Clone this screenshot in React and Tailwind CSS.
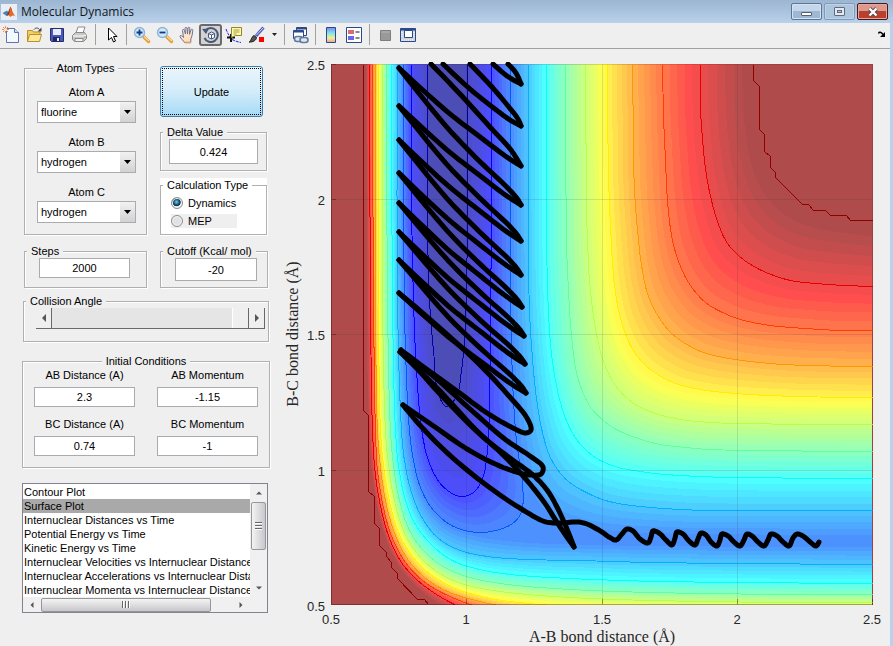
import React from "react";

/* ---------- contour geometry ---------- */

const LEVEL_STEP = 87.6;
const BANDS = 5;

// Contours from the highest level to the lowest, wall side.
const OUTER = [
  [[366, 64], [367, 300], [368, 400], [370, 450], [374, 490], [380, 520], [388, 545], [400, 568], [420, 590], [440, 605], [470, 620], [600, 638], [872, 645]],
  [[369, 64], [370, 300], [372, 430], [375, 475], [381, 510], [389, 538], [401, 562], [415, 578], [430, 590], [450, 602], [480, 615], [600, 630], [872, 636]],
  [[372, 64], [373, 300], [375, 430], [377, 470], [384, 512], [392, 538], [405, 562], [422, 580], [441, 592], [470, 604], [510, 614], [620, 624], [872, 628]],
  [[375, 64], [375, 300], [377, 430], [380, 467], [386, 505], [395, 535], [408, 560], [428, 580], [452, 593], [493, 604], [540, 611], [640, 617], [872, 620]],
  [[378, 64], [378, 300], [380, 430], [383, 465], [389, 501], [398, 532], [412, 556], [430, 574], [455, 588], [490, 598], [553, 605], [650, 609], [872, 612]],
  [[382, 64], [382, 300], [385, 430], [388, 465], [394, 500], [403, 530], [416, 552], [435, 570], [461, 583], [500, 591], [570, 597], [700, 601], [872, 602]],
  [[386, 64], [387, 300], [390, 430], [393, 465], [399, 500], [409, 530], [423, 550], [441, 565], [466, 576], [500, 583], [570, 589], [700, 593], [872, 594]],
  [[391, 64], [392, 300], [395, 430], [398, 465], [405, 500], [415, 524], [430, 543], [450, 559], [475, 568], [510, 574], [570, 578], [660, 581], [872, 583]],
  [[397, 64], [397, 300], [401, 430], [404, 460], [411, 492], [422, 518], [438, 538], [460, 550], [487, 556], [527, 559], [580, 560], [650, 562], [872, 564]],
  [[403, 64], [404, 300], [409, 430], [413, 460], [420, 487], [433, 510], [453, 526], [480, 533], [520, 538], [580, 541], [650, 542], [872, 543]],
];

// The same levels on the dissociation side.
const INNER = [
  [[742, 64], [744, 120], [750, 160], [762, 190], [785, 215], [815, 228], [872, 236]],
  [[700, 64], [700, 107], [703, 150], [706, 175], [711, 200], [718, 224], [727, 243], [737, 254], [750, 264], [768, 273], [790, 280], [815, 283], [845, 285], [872, 286]],
  [[662, 64], [663, 115], [665, 160], [667, 200], [672, 240], [680, 266], [690, 285], [705, 302], [722, 312], [740, 319], [770, 325], [805, 328], [840, 330], [872, 330]],
  [[632, 64], [633, 137], [634, 190], [638, 240], [641, 265], [647, 293], [656, 313], [670, 332], [688, 345], [706, 353], [735, 359], [770, 363], [805, 365], [872, 366]],
  [[607, 64], [608, 175], [611, 245], [614, 285], [620, 318], [630, 345], [643, 363], [657, 374], [675, 383], [700, 389], [735, 393], [795, 396], [872, 397]],
  [[585, 64], [586, 200], [587, 240], [589, 280], [594, 322], [602, 358], [615, 385], [632, 402], [655, 413], [675, 418], [710, 422], [750, 423], [800, 424], [872, 424]],
  [[565, 64], [566, 240], [568, 290], [571, 335], [577, 376], [589, 405], [603, 420], [620, 431], [655, 443], [685, 447], [710, 449], [750, 450], [872, 451]],
  [[546, 64], [546, 240], [549, 330], [553, 368], [560, 402], [569, 427], [580, 444], [592, 455], [602, 461], [618, 467], [640, 471], [665, 474], [700, 476], [735, 477], [872, 478]],
  [[528, 64], [528, 240], [529, 310], [533, 370], [537, 405], [542, 432], [549, 455], [560, 473], [572, 484], [590, 494], [602, 499], [618, 503], [640, 506], [680, 509], [720, 510], [872, 510]],
  [[510, 64], [510, 240], [511, 350], [515, 430], [520, 470], [528, 500], [545, 522], [575, 533], [620, 538], [700, 540], [872, 541]],
];

// Closed wells, from the right top round the bottom to the left top.
const WELLS = [
  [[510, 64], [510, 200], [511, 350], [515, 430], [518, 455], [522, 483], [522, 507], [518, 517], [507, 526], [480, 532], [453, 526], [433, 510], [420, 487], [413, 460], [409, 430], [405, 350], [403, 200], [403, 64]],
  [[491, 64], [491, 200], [490, 320], [489, 400], [487, 450], [482, 478], [473, 492], [461, 496], [450, 492], [439, 482], [429, 463], [422, 435], [416, 370], [412, 260], [411, 160], [411, 64]],
  [[467, 64], [467, 180], [466, 290], [464, 340], [461, 370], [456, 396], [446, 406], [438, 394], [433, 350], [429, 300], [427, 220], [427, 150], [427, 64]],
];

const RIDGE_FAR = [[753, 64], [753, 80], [759, 86], [759, 129], [764, 134], [764, 151], [770, 156], [770, 167], [775, 172], [775, 177], [802, 204], [808, 204], [813, 210], [825, 210], [830, 215], [846, 215], [850, 220], [872, 220]];
const RIDGE_WALL = [[363, 64], [363, 410], [368, 415], [368, 491], [374, 496], [374, 523], [379, 528], [379, 545], [386, 552], [386, 556], [391, 562], [391, 567], [397, 573], [397, 578], [417, 599], [424, 599], [428, 604]];

function smooth(pts, n = 8) {
  const out = [];
  for (let i = 0; i < pts.length - 1; i++) {
    const p0 = pts[Math.max(i - 1, 0)];
    const p1 = pts[i];
    const p2 = pts[i + 1];
    const p3 = pts[Math.min(i + 2, pts.length - 1)];
    const d = (a, b) => Math.max(Math.sqrt(Math.hypot(a[0] - b[0], a[1] - b[1])), 0.001);
    const d1 = d(p0, p1);
    const d2 = d(p1, p2);
    const d3 = d(p2, p3);
    const c = [0, 1].map((k) => {
      const a = i === 0 ? p1[k] : (d1 * d1 * p2[k] - d2 * d2 * p0[k] + (2 * d1 * d1 + 3 * d1 * d2 + d2 * d2) * p1[k]) / (3 * d1 * (d1 + d2));
      const b = i === pts.length - 2 ? p2[k] : (d3 * d3 * p1[k] - d2 * d2 * p3[k] + (2 * d3 * d3 + 3 * d3 * d2 + d2 * d2) * p2[k]) / (3 * d3 * (d3 + d2));
      return [p1[k], a, b, p2[k]];
    });
    for (let s = 0; s < n; s++) {
      const t = s / n;
      const u = 1 - t;
      out.push(c.map((q) => u * u * u * q[0] + 3 * u * u * t * q[1] + 3 * u * t * t * q[2] + t * t * t * q[3]));
    }
  }
  out.push(pts[pts.length - 1]);
  return out;
}

// Points of a contour on rays that leave the top right corner of the axes.
function onRays(pts, rays = 120) {
  const line = smooth(pts);
  const out = [];
  let i = 0;
  for (let r = 0; r <= rays; r++) {
    const a = (Math.PI / 2) * (r / rays);
    const side = (p) => (p[1] - 64) * Math.cos(a) - (872 - p[0]) * Math.sin(a);
    while (i < line.length - 2 && side(line[i + 1]) < 0) i++;
    const s0 = side(line[i]);
    const s1 = side(line[i + 1]);
    const t = s1 === s0 ? 0 : Math.min(1, Math.max(0, -s0 / (s1 - s0)));
    out.push([0, 1].map((k) => line[i][k] + (line[i + 1][k] - line[i][k]) * t));
  }
  return out;
}

function byLength(pts, n = 140) {
  const line = smooth(pts);
  const len = [0];
  for (let i = 1; i < line.length; i++) len.push(len[i - 1] + Math.hypot(line[i][0] - line[i - 1][0], line[i][1] - line[i - 1][1]));
  const total = len[len.length - 1];
  const out = [];
  let i = 0;
  for (let k = 0; k <= n; k++) {
    const s = (total * k) / n;
    while (i < line.length - 2 && len[i + 1] < s) i++;
    const t = (s - len[i]) / (len[i + 1] - len[i]);
    out.push([0, 1].map((c) => line[i][c] + (line[i + 1][c] - line[i][c]) * t));
  }
  return out;
}

const blend = (a, b, t) => a.map((p, i) => [p[0] + (b[i][0] - p[0]) * t, p[1] + (b[i][1] - p[1]) * t]);
const toPath = (pts) => "M" + pts.map((p) => p[0].toFixed(1) + " " + p[1].toFixed(1)).join("L");

function jet(d) {
  if (d < 112) return [143 + d, 0, 0];
  if (d < 367) return [255, d - 112, 0];
  if (d < 622) return [622 - d, 255, d - 367];
  if (d < 877) return [0, 877 - d, 255];
  return [0, 0, 1132 - d];
}
const lineColor = (d) => `rgb(${jet(d).map(Math.round).join(",")})`;
const fillColor = (d) => `rgb(${jet(d).map((c) => Math.round(77 + 0.7 * c)).join(",")})`;

function buildBands() {
  const outer = OUTER.map((c) => onRays(c));
  const inner = INNER.map((c) => onRays(c));
  const wells = WELLS.map((c) => byLength(c));
  const bands = [];
  for (let l = 0; l < outer.length - 1; l++)
    for (let b = 0; b < BANDS; b++) {
      const t = b / BANDS;
      const o = blend(outer[l], outer[l + 1], t);
      const n = blend(inner[l], inner[l + 1], t).reverse();
      bands.push({ d: toPath([...o, ...n]) + "Z", fill: fillColor((l + t + 0.5 / BANDS) * LEVEL_STEP) });
    }
  for (let l = 0; l < 2; l++)
    for (let b = 0; b < BANDS; b++) {
      const t = b / BANDS;
      bands.push({ d: toPath(blend(wells[l], wells[l + 1], t)) + "Z", fill: fillColor((9 + l + t + 0.5 / BANDS) * LEVEL_STEP) });
    }
  bands.push({ d: toPath(wells[2]) + "Z", fill: fillColor(980) });
  return bands;
}

function buildLines() {
  const lines = [
    { d: toPath(RIDGE_FAR), stroke: "#8f0000" },
    { d: toPath(RIDGE_WALL), stroke: "#8f0000" },
  ];
  for (let l = 1; l < 9; l++) {
    lines.push({ d: toPath(smooth(OUTER[l])), stroke: lineColor(l * LEVEL_STEP) });
    lines.push({ d: toPath(smooth(INNER[l])), stroke: lineColor(l * LEVEL_STEP) });
  }
  WELLS.forEach((w, i) => lines.push({ d: toPath(smooth(w)), stroke: lineColor((9 + i) * LEVEL_STEP) }));
  return lines;
}

/* ---------- trajectory ---------- */

const WAVE = [
  [819, 542], [816, 546], [809, 541], [803, 536], [797, 534], [793, 538], [789, 546], [783, 542], [777, 536], [771, 534], [768, 540], [764, 546], [758, 542], [752, 536],
  [747, 534], [744, 540], [740, 546], [734, 542], [728, 536], [722, 534], [720, 540], [717, 546], [711, 542], [706, 535], [701, 533], [698, 539], [695, 545], [689, 541],
  [683, 534], [677, 532], [675, 538], [672, 545], [666, 540], [659, 533], [653, 531], [651, 537], [648, 543], [640, 539], [633, 531], [627, 529], [622, 534], [616, 540],
  [609, 537], [602, 532], [587, 524], [577, 522], [563, 523], [553, 523], [543, 521], [523, 510], [500, 495], [467, 470], [440, 446], [418, 423], [403, 405],
];
const LOOP_1 = [[403, 405], [435, 427], [467, 449], [493, 463], [513, 471], [530, 475], [541, 474], [543, 467], [530, 456], [506, 440], [470, 409], [432, 375], [400, 352]];
const DIVE = [[400, 352], [440, 391], [476, 430], [500, 452], [524, 477], [544, 502], [560, 527], [574, 547]];
const RISE = [[574, 547], [567, 529], [557, 507], [547, 490], [533, 475], [510, 458], [483, 437], [440, 394], [401, 350]];
const LOOP_2 = [[401, 350], [425, 368], [457, 391], [487, 413], [513, 428], [526, 433], [531, 430], [527, 418], [508, 395], [480, 365], [440, 328], [399, 293]];
const LEFT_TIPS = [293, 260, 232, 203, 173, 140, 106, 68];
const RIGHT_TIPS = [[526, 393], [525, 364], [524, 336], [522, 307], [521, 275], [521, 241], [521, 205], [521, 166]];

function zigzag() {
  const paths = [];
  const leg = (l, r, fractions) => fractions.map(([fx, fy]) => [399 + (r[0] - 399) * fx, l + (r[1] - l) * fy]);
  const out = [[0, 0], [0.39, 0.44], [0.66, 0.7], [0.885, 0.91], [1, 1]];
  const back = [[0, 0], [0.39, 0.43], [0.66, 0.68], [0.885, 0.87], [0.97, 0.955], [1, 1]];
  LEFT_TIPS.forEach((l, i) => {
    paths.push(leg(l, RIGHT_TIPS[i], out));
    if (i > 0) paths.push(leg(l, RIGHT_TIPS[i - 1], back));
  });
  paths.push([[431, 64], [460, 94], [490, 127], [511, 150], [521, 166]]);
  paths.push([[443, 64], [470, 89], [495, 109], [510, 120], [521, 126]]);
  paths.push([[470, 64], [492, 87], [508, 106], [518, 119], [521, 126]]);
  paths.push([[493, 64], [507, 76], [521, 84]]);
  paths.push([[508, 64], [516, 73], [521, 84]]);
  return paths;
}

const bands = buildBands();
const contourLines = buildLines();
const trajectory = [WAVE, LOOP_1, DIVE, RISE, LOOP_2, ...zigzag()].map((p) => toPath(smooth(p, 6)));

const X_TICKS = [["0.5", 331], ["1", 466], ["1.5", 602], ["2", 737], ["2.5", 872]];
const Y_TICKS = [["2.5", 64], ["2", 199], ["1.5", 334], ["1", 470], ["0.5", 605]];

function SurfacePlot() {
  return (
    <svg viewBox="280 50 610 596" className="block w-full" role="img" aria-label="Surface plot of B-C against A-B bond distance">
      <defs>
        <clipPath id="axes">
          <rect x="331" y="64" width="542" height="541" />
        </clipPath>
        <clipPath id="track">
          <rect x="331" y="62" width="542" height="543" />
        </clipPath>
      </defs>
      <g clipPath="url(#axes)">
        <rect x="331" y="64" width="542" height="541" fill="#af4c4b" />
        <g shapeRendering="crispEdges">
          {bands.map((b, i) => <path key={i} d={b.d} fill={b.fill} />)}
        </g>
        <g fill="none" strokeWidth="1" shapeRendering="crispEdges" transform="translate(0.5 0.5)">
          {contourLines.map((l, i) => <path key={i} d={l.d} stroke={l.stroke} />)}
        </g>
        <g stroke="#262626" strokeOpacity="0.13" shapeRendering="crispEdges">
          {X_TICKS.slice(1, 4).map(([t, x]) => <path key={t} d={`M${x + 0.5} 64V605`} />)}
          {Y_TICKS.slice(1, 4).map(([t, y]) => <path key={t} d={`M331 ${y + 0.5}H873`} />)}
        </g>
      </g>
      <g fill="none" shapeRendering="crispEdges" strokeOpacity="0.35" stroke="#200000">
        <path d="M331.5 64V605M331 604.5H873" />
        {X_TICKS.slice(1).map(([t, x]) => <path key={t} d={`M${x + 0.5} 599V604`} />)}
        {Y_TICKS.slice(0, 4).map(([t, y]) => <path key={t} d={`M332 ${y + 0.5}H336`} />)}
      </g>
      <path d="M331 64.5H872.5V604" fill="none" stroke="#600000" strokeOpacity="0.16" shapeRendering="crispEdges" />
      <g clipPath="url(#track)" fill="none" stroke="#000" strokeWidth="5" strokeLinecap="round" strokeLinejoin="round">
        {trajectory.map((d, i) => <path key={i} d={d} />)}
      </g>
      <g className="font-['Liberation_Sans',sans-serif] text-[13px]" fill="#262626">
        {X_TICKS.map(([t, x]) => <text key={t} x={x} y="624" textAnchor="middle">{t}</text>)}
        {Y_TICKS.map(([t, y]) => <text key={t} x="325" y={y + 6} textAnchor="end">{t}</text>)}
      </g>
      <g className="font-['Liberation_Serif',serif] text-[16px]" fill="#262626" textAnchor="middle">
        <text x="602" y="642">A-B bond distance (Å)</text>
        <text transform="translate(298 334) rotate(-90)">B-C bond distance (Å)</text>
      </g>
    </svg>
  );
}

/* ---------- toolbar ---------- */

const Icon = ({ children }) => (
  <svg width="18" height="18" viewBox="0 0 18 18" className="block shrink-0">{children}</svg>
);

const Lens = ({ plus }) => (
  <Icon>
    <path d="M11 11L15.500 15.500" stroke="#e0a040" strokeWidth="3.400" strokeLinecap="round" />
    <path d="M11 10.500L16 15" stroke="#ffd98a" strokeWidth="1.200" />
    <circle cx="6.500" cy="6.500" r="5" fill="#cfeafa" stroke="#8db4dc" strokeWidth="1.400" />
    <path d={plus ? "M3.500 6.500h6M6.500 3.500v6" : "M3.500 6.500h6"} stroke="#123a80" strokeWidth="1.800" />
  </Icon>
);

const icons = {
  "New Figure": (
    <Icon>
      <path d="M4.500 2.500h8l4 4v10h-12z" fill="#f4f8ff" stroke="#5a76b0" />
      <path d="M12.500 2.500v4h4" fill="#cfdcf2" stroke="#5a76b0" />
      <path d="M3.500 0v7M0 3.500h7M1 1l5 5M6 1L1 6" stroke="#e58a5a" />
      <circle cx="3.500" cy="3.500" r="1.500" fill="#ffe9c0" />
    </Icon>
  ),
  "Open File": (
    <Icon>
      <path d="M2.500 15.500v-11h5l1 1.500h6.500v3" fill="#f3cf62" stroke="#b8902c" />
      <path d="M2.500 15.500l2-7h12l-2 7z" fill="#ffe89a" stroke="#b8902c" />
      <path d="M9 3.500c1.500-2 4-2 5.500 0" fill="none" stroke="#444" />
      <path d="M16.500 1.500v4h-4z" fill="#444" />
    </Icon>
  ),
  "Save Figure": (
    <Icon>
      <path d="M2.500 2.500h13v13h-12l-1-1z" fill="#4a56b8" stroke="#24306e" />
      <path d="M5 3h8v6H5z" fill="#e8ecff" />
      <path d="M5 11h7v4.500H5z" fill="#20285e" />
      <path d="M9 12h2v3H9z" fill="#e8ecff" />
    </Icon>
  ),
  "Print Figure": (
    <Icon>
      <path d="M5 7l2-6h7l-2 6z" fill="#fff" stroke="#8a8a8a" />
      <path d="M1.500 9.500l3-3h9l2 3v3l-3 3h-9l-2-2z" fill="#c9c9c9" stroke="#8a8a8a" />
      <path d="M2 10h10l3-1" fill="none" stroke="#fff" />
      <path d="M4 12.500h8v3H4z" fill="#f2f2f2" stroke="#8a8a8a" />
      <path d="M13 11h1.500" stroke="#b7a83a" />
    </Icon>
  ),
  "Edit Plot": (
    <Icon>
      <path d="M6.500 2v12l3-2.500 2 4.500 2-1-2-4.500h3.500z" fill="#fff" stroke="#000" />
    </Icon>
  ),
  "Zoom In": <Lens plus />,
  "Zoom Out": <Lens />,
  Pan: (
    <Icon>
      <path d="M5.500 16.500c-1-2-4-4-4.500-6 0-1.500 1.500-1.500 3.500 1L3.500 4.500c0-1.500 1.500-1.500 2 0l1 3.500-.500-5.500c0-1.500 2-1.500 2 0l.5 5.500.5-6c.3-1.200 1.800-1 1.800.3l-.3 6 1.500-4.500c.5-1.200 2-.8 1.800.6-.5 4-.8 6-2 8.500v3.600z" fill="#ffe2c0" stroke="#6a6f9a" />
      <path d="M6 16.500h6" stroke="#e0a070" strokeWidth="2" />
    </Icon>
  ),
  "Rotate 3D": (
    <Icon>
      <path d="M3.500 4.500A7 7 0 1 1 2.500 12" fill="none" stroke="#46587c" strokeWidth="2" />
      <path d="M0 3l7-.5L4 8z" fill="#46587c" />
      <path d="M6.500 7.500l3-1.500 3 1.500v4l-3 1.500-3-1.500zM6.500 7.500l3 1.500 3-1.500M9.500 9v4" fill="#fff" stroke="#46587c" />
    </Icon>
  ),
  "Data Cursor": (
    <Icon>
      <path d="M1 3c1 3 2.500 6 5 9M7 13.500c3 1.500 6 2.500 9 3" fill="none" stroke="#22f" strokeDasharray="3 1" />
      <path d="M2 11.500h8M6 8v8" stroke="#111" strokeWidth="2" />
      <path d="M6.500 1.500h10v8h-6l-4 2z" fill="#fff8a8" stroke="#8f8630" />
      <path d="M8.500 4h6M8.500 6h6M8.500 8h3" stroke="#a59c4a" />
    </Icon>
  ),
  Brush: (
    <Icon>
      <path d="M8 10L15.500 1.500" stroke="#4a5cb8" strokeWidth="3" />
      <path d="M8.500 9L15.500 1.500" stroke="#d5dcff" />
      <path d="M1 16c2 0 2-5 5-6.500l2.500 2C8.500 14 5 16.500 1 16z" fill="#555" stroke="#222" />
      <path d="M11 11h5v5h-5z" fill="#f00" />
    </Icon>
  ),
  "Link Plot": (
    <Icon>
      <path d="M5.500 1.500h10v8h-10z" fill="#fff" stroke="#2b4a8c" />
      <path d="M5.500 2.500h10" stroke="#2b4a8c" strokeWidth="2" />
      <path d="M2.500 4.500h10v8h-10z" fill="#fff" stroke="#2b4a8c" />
      <path d="M2.500 5.500h10" stroke="#2b4a8c" strokeWidth="2" />
      <rect x="3.500" y="10.500" width="8" height="5" rx="2.500" fill="#dbe6f2" stroke="#60799c" strokeWidth="1.600" />
      <rect x="9" y="11.500" width="8" height="5" rx="2.500" fill="#dbe6f2" stroke="#60799c" strokeWidth="1.600" />
    </Icon>
  ),
  "Insert Colorbar": (
    <Icon>
      <defs>
        <linearGradient id="cbar" x1="0" y1="0" x2="0" y2="1">
          <stop offset="0" stopColor="#7d86ea" />
          <stop offset="0.35" stopColor="#7fe0ea" />
          <stop offset="0.7" stopColor="#f3ee9a" />
          <stop offset="1" stopColor="#f0a08a" />
        </linearGradient>
      </defs>
      <path d="M4.500 1.500h9v15h-9z" fill="url(#cbar)" stroke="#2b4a8c" />
    </Icon>
  ),
  "Insert Legend": (
    <Icon>
      <path d="M1.500 1.500h15v15h-15z" fill="#fff" stroke="#2b4a8c" />
      <path d="M3 4h6v4H3z" fill="#e06a6a" />
      <path d="M3 10h6v4H3z" fill="#6a6ae6" />
      <path d="M10.500 6h4M10.500 12h4" stroke="#111" />
    </Icon>
  ),
  "Hide Plot Tools": (
    <Icon>
      <path d="M4.500 4.500h10v10h-10z" fill="#999" stroke="#7d7d7d" />
      <path d="M5 6h9" stroke="#b5b5b5" />
    </Icon>
  ),
  "Show Plot Tools": (
    <Icon>
      <path d="M1.500 2.500h15v13h-15z" fill="#cfd4dc" stroke="#2b4a8c" />
      <path d="M1.500 3.500h15" stroke="#2b4a8c" strokeWidth="2" />
      <path d="M5.500 4.500h8v7h-8z" fill="#fff" stroke="#2b4a8c" />
      <path d="M3 6v5M15 6v5M3 14h12" stroke="#fff" strokeDasharray="1 1" />
    </Icon>
  ),
};

const Tool = ({ name, pressed }) => (
  <button
    type="button"
    aria-label={name}
    className={
      pressed
        ? "flex h-[22px] w-[23px] items-center justify-center rounded-[3px] border-2 border-[#6a6a6a] bg-[#d3d3d3]"
        : "flex h-[22px] w-[23px] items-center justify-center"
    }
  >
    {icons[name]}
  </button>
);

const Separator = () => (
  <span className="flex w-2 justify-center self-stretch py-px">
    <span className="w-px bg-[#a0a0a0]" />
  </span>
);

function Toolbar() {
  return (
    <div className="-ml-px flex h-[26px] items-center border-b border-[#a0a0a0] bg-[#efefef] pb-0.5">
      <Tool name="New Figure" />
      <Tool name="Open File" />
      <Tool name="Save Figure" />
      <Tool name="Print Figure" />
      <Separator />
      <Tool name="Edit Plot" />
      <Separator />
      <Tool name="Zoom In" />
      <Tool name="Zoom Out" />
      <Tool name="Pan" />
      <Tool name="Rotate 3D" pressed />
      <Tool name="Data Cursor" />
      <Tool name="Brush" />
      <button type="button" aria-label="Brush colors" className="flex h-5 w-3 items-center justify-center">
        <svg width="5" height="3" viewBox="0 0 5 3"><path d="M0 0h5L2.500 3z" fill="#222" /></svg>
      </button>
      <Separator />
      <Tool name="Link Plot" />
      <Separator />
      <Tool name="Insert Colorbar" />
      <Tool name="Insert Legend" />
      <Separator />
      <Tool name="Hide Plot Tools" />
      <Tool name="Show Plot Tools" />
      <button type="button" aria-label="Dock figure" className="mr-1 ml-auto">
        <svg width="8" height="7" viewBox="0 0 8 7" className="block">
          <path d="M0.500 2.500C1 0.500 3 0.800 5 3.500" fill="none" stroke="#000" strokeWidth="1.500" />
          <path d="M7 1v5H2z" fill="#000" />
        </svg>
      </button>
    </div>
  );
}

function TitleBar() {
  return (
    <header className="flex h-[23px] items-center bg-linear-to-b from-[#9cb5d1] to-[#b9d1ea]">
      <svg width="16" height="16" viewBox="0 0 16 16" className="ml-px block">
        <path d="M0 0h16v16H0z" fill="#e9eef5" />
        <path d="M1.500 9L6 6.500 8 9l-2.500 3z" fill="#3f86c0" />
        <path d="M5.500 12L8 6l1.500-3.500L11 6l-3 5z" fill="#8c2f20" />
        <path d="M9.500 2.500c1 2 2.500 7 5 10-2-1.500-3-1.500-5 .5-1-.8-1.500-1.500-2-2 1-2 1.500-6 2-8.500z" fill="#e06a28" />
      </svg>
      <h1 className="ml-1 font-['Open_Sans',sans-serif] text-[12px] leading-4 text-[#101820]">Molecular Dynamics</h1>
      <div className="mr-[5px] ml-auto flex gap-0.5">
        <button type="button" aria-label="Minimize" className="flex h-[17px] w-[31px] items-end justify-center rounded-[2px] border border-[#5c7396] bg-linear-to-b from-[#c4d6ea] from-45% to-[#9db8d3] to-45% pb-[3px] shadow-[inset_0_0_0_1px_#d5e2f0]">
          <span className="h-1 w-[11px] rounded-[1px] border border-[#555f6e] bg-white" />
        </button>
        <button type="button" aria-label="Maximize" className="flex h-[17px] w-[31px] items-center justify-center rounded-[2px] border border-[#8099b8] bg-[#aec5de] shadow-[inset_0_0_0_1px_#c0d3e8]">
          <span className="flex h-[9px] w-[11px] items-center justify-center rounded-[1px] border border-[#5f6a7a] bg-[#e4e8ee]">
            <span className="h-[3px] w-[5px] border border-[#5f6a7a] bg-[#aec5de]" />
          </span>
        </button>
        <button type="button" aria-label="Close" className="flex h-[17px] w-[31px] items-center justify-center rounded-[2px] border border-[#4a1420] bg-linear-to-b from-[#dc9a8c] from-45% to-[#b8402c] to-45% shadow-[inset_0_0_0_1px_#e8a898]">
          <svg width="12" height="10" viewBox="0 0 12 10" className="block">
            <path d="M2.500 1.500L9.500 8.500M9.500 1.500L2.500 8.500" stroke="#5a4650" strokeWidth="4" />
            <path d="M2.500 1.500L9.500 8.500M9.500 1.500L2.500 8.500" stroke="#fff" strokeWidth="2.400" />
          </svg>
        </button>
      </div>
    </header>
  );
}

/* ---------- control panel ---------- */

const Group = ({ title, center, white, className = "", body = "", children }) => (
  <fieldset className={`min-w-0 border border-[#b0b0b0] shadow-[1px_1px_0_#fff,inset_1px_1px_0_#fff] ${className}`}>
    <legend className={`px-1 whitespace-nowrap ${center ? "mx-auto" : "ml-0.5"} ${white ? "bg-white" : "bg-[#efefef]"}`}>{title}</legend>
    <div className={body}>{children}</div>
  </fieldset>
);

const TextBox = ({ id, label, value, className = "h-5" }) => (
  <input
    id={id}
    aria-label={label}
    defaultValue={value}
    className={`block w-full min-w-0 border border-[#a9abb1] bg-white text-center ${className}`}
  />
);

const AtomSelect = ({ id, label, value }) => (
  <div className="flex flex-col gap-0.5">
    <label htmlFor={id} className="text-center">{label}</label>
    <div className="relative">
      <select id={id} defaultValue={value} className="block h-[22px] w-full appearance-none border border-[#a9abb1] bg-white pl-[3px]">
        <option>fluorine</option>
        <option>hydrogen</option>
      </select>
      <span className="pointer-events-none absolute inset-y-px right-px flex w-[15px] items-center justify-center bg-linear-to-b from-[#f2f2f2] to-[#d2d2d2]">
        <svg width="7" height="4" viewBox="0 0 7 4"><path d="M0 0h7L3.500 4z" fill="#000" /></svg>
      </span>
    </div>
  </div>
);

const RadioRow = ({ label, checked, className = "" }) => (
  <label className={`flex h-[14px] w-[66px] items-center gap-[5px] ${className}`}>
    <input
      type="radio"
      name="calculation"
      defaultChecked={checked}
      className="size-3 appearance-none rounded-full border border-[#8a8f94] bg-[#e2e2e2] shadow-[inset_0_0_0_1px_#f6f6f6] checked:bg-[radial-gradient(circle_at_45%_40%,#6fd0f0_0,#17506f_35%,#0c3550_48%,#e8e8e8_56%)]"
    />
    {label}
  </label>
);

const Arrow = ({ d, size = 8, fill = "#555" }) => (
  <svg width={size} height={size} viewBox="0 0 8 8" className="block"><path d={d} fill={fill} /></svg>
);

const LEFT = "M6 0v8L2 4z";
const RIGHT = "M2 0v8l4-4z";
const UP = "M0 6h8L4 2z";
const DOWN = "M0 2h8L4 6z";

const PLOTS = [
  "Contour Plot",
  "Surface Plot",
  "Internuclear Distances vs Time",
  "Potential Energy vs Time",
  "Kinetic Energy vs Time",
  "Internuclear Velocities vs Internuclear Distance",
  "Internuclear Accelerations vs Internuclear Distance",
  "Internuclear Momenta vs Internuclear Distance",
];

function PlotList() {
  return (
    <div className="mr-3 ml-[22px] grid grid-cols-[1fr_17px] border border-[#82838f] bg-[#f0f0f0]">
      <ul role="listbox" aria-label="Plot type" className="min-w-0 overflow-hidden bg-white pt-px whitespace-nowrap">
        {PLOTS.map((p) => (
          <li
            key={p}
            role="option"
            aria-selected={p === "Surface Plot"}
            className={p === "Surface Plot" ? "bg-[#a9a9a9] pl-px" : "pl-px"}
          >
            {p}
          </li>
        ))}
      </ul>
      <div className="flex flex-col items-center">
        <button type="button" aria-label="Scroll up" className="flex h-[18px] items-center"><Arrow d={UP} size={6} /></button>
        <div className="flex h-12 w-[15px] flex-col items-center justify-center gap-px rounded-[2px] border border-[#979797] bg-linear-to-r from-[#f4f4f4] to-[#c8c8cc]">
          <span className="h-0.5 w-[7px] border-t border-[#666] bg-white" />
          <span className="h-0.5 w-[7px] border-t border-[#666] bg-white" />
          <span className="h-0.5 w-[7px] border-t border-[#666] bg-white" />
        </div>
        <button type="button" aria-label="Scroll down" className="mt-auto flex h-[18px] items-center"><Arrow d={DOWN} size={6} /></button>
      </div>
      <div className="flex h-[15px] items-center">
        <button type="button" aria-label="Scroll left" className="flex w-[18px] justify-center"><Arrow d={LEFT} size={6} /></button>
        <div className="flex h-[14px] w-3/4 items-center justify-center gap-px rounded-[2px] border border-[#979797] bg-linear-to-b from-[#f4f4f4] to-[#c8c8cc]">
          <span className="h-[7px] w-0.5 border-l border-[#666] bg-white" />
          <span className="h-[7px] w-0.5 border-l border-[#666] bg-white" />
          <span className="h-[7px] w-0.5 border-l border-[#666] bg-white" />
        </div>
        <button type="button" aria-label="Scroll right" className="ml-auto flex w-[18px] justify-center"><Arrow d={RIGHT} size={6} /></button>
      </div>
    </div>
  );
}

function ControlPanel() {
  return (
    <form className="w-[280px] shrink-0 pt-[11px] font-['Liberation_Sans',Arial,sans-serif] text-[11px] leading-[14px] text-black">
      <div className="ml-6 flex gap-[13px] pr-[13px]">
        <div className="w-[123px]">
          <Group title="Atom Types" center body="flex flex-col gap-3 pt-2.5 pr-2.5 pb-[11px] pl-3">
            <AtomSelect id="atom-a" label="Atom A" value="fluorine" />
            <AtomSelect id="atom-b" label="Atom B" value="hydrogen" />
            <AtomSelect id="atom-c" label="Atom C" value="hydrogen" />
          </Group>
        </div>
        <div className="flex flex-1 flex-col pt-[5px]">
          <button type="button" className="h-[51px] w-[103px] rounded-[3px] border border-[#3c7fb1] bg-linear-to-b from-[#e9f5fc] from-0% via-[#d5edfa] via-48% to-[#a5daf5] p-px">
            <span className="flex h-full items-center justify-center border border-dotted border-black">Update</span>
          </button>
          <Group title="Delta Value" className="mt-2" body="px-2 pb-1.5">
            <TextBox label="Delta Value" value="0.424" className="h-[25px]" />
          </Group>
          <div className="mt-[7px] bg-white pb-px">
            <Group title="Calculation Type" white body="flex flex-col gap-1 pt-1 pb-1.5 pl-2.5">
              <RadioRow label="Dynamics" checked />
              <RadioRow label="MEP" className="bg-[#efefef]" />
            </Group>
          </div>
        </div>
      </div>

      <div className="mt-2 ml-6 flex gap-[13px] pr-3">
        <div className="w-[123px]">
          <Group title="Steps" body="pr-4 pb-[9px] pl-[14px]">
            <TextBox label="Steps" value="2000" />
          </Group>
        </div>
        <div className="flex-1">
          <Group title="Cutoff (Kcal/ mol)" body="pr-2.5 pb-1.5 pl-[14px]">
            <TextBox label="Cutoff (Kcal/ mol)" value="-20" className="h-[23px]" />
          </Group>
        </div>
      </div>

      <Group title="Collision Angle" className="mt-1.5 mr-[11px] ml-[23px]" body="pr-[3px] pb-3 pl-3">
        <div className="flex h-[21px] border-b border-[#696969] bg-[#e5e5e5]">
          <button type="button" aria-label="Decrease angle" className="flex w-4 items-center justify-center border-r border-[#696969] bg-[#efefef]">
            <Arrow d={LEFT} />
          </button>
          <input
            type="range"
            aria-label="Collision Angle"
            min="0"
            max="180"
            defaultValue="180"
            className="h-5 min-w-0 flex-1 appearance-none bg-transparent [&::-webkit-slider-thumb]:h-5 [&::-webkit-slider-thumb]:w-[17px] [&::-webkit-slider-thumb]:appearance-none [&::-webkit-slider-thumb]:border-r [&::-webkit-slider-thumb]:border-l [&::-webkit-slider-thumb]:border-r-[#696969] [&::-webkit-slider-thumb]:border-l-white [&::-webkit-slider-thumb]:bg-[#efefef]"
          />
          <button type="button" aria-label="Increase angle" className="flex w-4 items-center justify-center border-r border-[#696969] bg-[#efefef]">
            <Arrow d={RIGHT} />
          </button>
        </div>
      </Group>

      <Group title="Initial Conditions" center className="mt-3 mr-2.5 ml-[22px]" body="grid grid-cols-2 gap-x-[22px] gap-y-2.5 px-[11px] pb-[11px]">
        {[
          ["ab-distance", "AB Distance (A)", "2.3"],
          ["ab-momentum", "AB Momentum", "-1.15"],
          ["bc-distance", "BC Distance (A)", "0.74"],
          ["bc-momentum", "BC Momentum", "-1"],
        ].map(([id, label, value]) => (
          <div key={id} className="flex flex-col gap-[5px]">
            <label htmlFor={id} className="text-center">{label}</label>
            <TextBox id={id} label={label} value={value} />
          </div>
        ))}
      </Group>

      <div className="mt-[15px]">
        <PlotList />
      </div>
    </form>
  );
}

export default function App() {
  return (
    <div className="flex min-h-screen flex-col bg-[#b9d1ea]">
      <TitleBar />
      <div className="mr-[3px] flex flex-1 flex-col bg-[#efefef]">
        <Toolbar />
        <main className="flex flex-1 pt-px">
          <ControlPanel />
          <div className="min-w-0 flex-1">
            <SurfacePlot />
          </div>
        </main>
      </div>
    </div>
  );
}
